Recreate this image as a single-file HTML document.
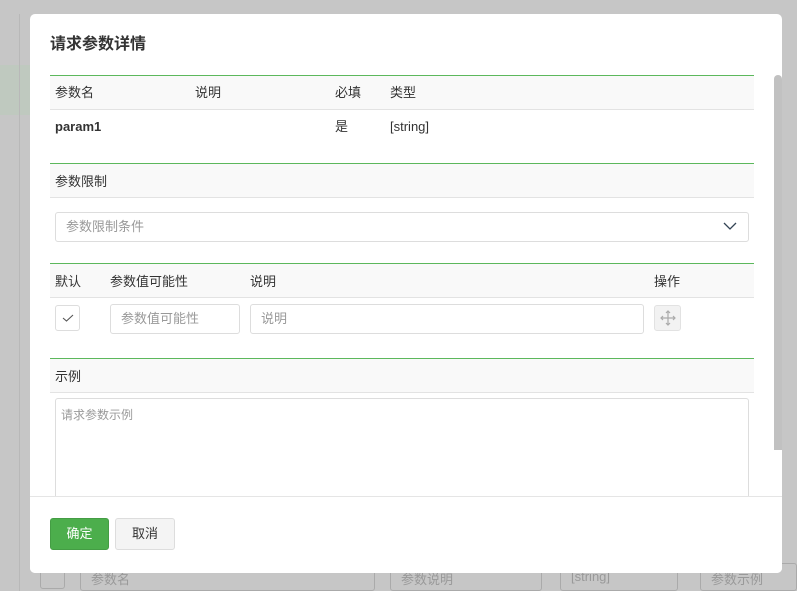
<!DOCTYPE html>
<html><head><meta charset="utf-8"><style>
*{box-sizing:border-box;margin:0;padding:0}
body{width:797px;height:591px;overflow:hidden;background:#c6c6c6;font-family:"Liberation Sans","Noto Sans CJK SC",sans-serif;font-size:13px;color:#333;position:relative}
.a{position:absolute}
.t{line-height:20px;height:20px}
.modal{left:30px;top:14px;width:752px;height:559px;background:#fff;border-radius:5px;overflow:hidden}
.hd{background:#f9f9f9;border-top:1px solid #5cb85c;border-bottom:1px solid #e3e3e3;height:35px}
.inp{border:1px solid #ddd;border-radius:3px;background:#fff;color:#999;padding-left:10px}
</style></head><body>
<div class="a" style="left:0;top:65px;width:30px;height:50px;background:#bfc9bf"></div>
<div class="a" style="left:19px;top:14px;width:1px;height:577px;background:#b8b8b8"></div>
<div class="a" style="left:40px;top:563px;width:25px;height:26px;border:1px solid #aaa;border-radius:3px"></div>
<div class="a" style="left:80px;top:563px;width:295px;height:28px;border:1px solid #aaa;border-radius:3px;color:#999;padding:5px 10px">参数名</div>
<div class="a" style="left:390px;top:563px;width:152px;height:28px;border:1px solid #aaa;border-radius:3px;color:#999;padding:5px 10px">参数说明</div>
<div class="a" style="left:560px;top:563px;width:118px;height:28px;border:1px solid #aaa;border-radius:3px;color:#999;padding:5px 10px">[string]</div>
<div class="a" style="left:700px;top:563px;width:97px;height:28px;border:1px solid #aaa;border-radius:3px;color:#999;padding:5px 10px">参数示例</div>
<div class="a modal">
 <div class="a" style="left:20px;top:19px;font-size:16px;font-weight:bold;color:#333;line-height:24px">请求参数详情</div>
 <div class="a" style="left:744px;top:61px;width:8px;height:375px;background:#c1c1c1;border-radius:4px 4px 0 0"></div>
 <div class="a hd" style="left:20px;top:61px;width:704px"></div>
 <div class="a t" style="left:25px;top:69px">参数名</div>
 <div class="a t" style="left:165px;top:69px">说明</div>
 <div class="a t" style="left:305px;top:69px">必填</div>
 <div class="a t" style="left:360px;top:69px">类型</div>
 <div class="a t" style="left:25px;top:103px;font-weight:bold">param1</div>
 <div class="a t" style="left:305px;top:103px">是</div>
 <div class="a t" style="left:360px;top:103px">[string]</div>
 <div class="a hd" style="left:20px;top:149px;width:704px"></div>
 <div class="a t" style="left:25px;top:158px">参数限制</div>
 <div class="a inp" style="left:25px;top:198px;width:694px;height:30px;line-height:28px">参数限制条件</div>
 <svg class="a" style="left:692px;top:206px" width="16" height="12"><path d="M2 3 L8 9 L14 3" fill="none" stroke="#345" stroke-width="1.3"/></svg>
 <div class="a hd" style="left:20px;top:249px;width:704px"></div>
 <div class="a t" style="left:25px;top:258px">默认</div>
 <div class="a t" style="left:80px;top:258px">参数值可能性</div>
 <div class="a t" style="left:220px;top:258px">说明</div>
 <div class="a t" style="left:624px;top:258px">操作</div>
 <div class="a" style="left:25px;top:291px;width:25px;height:26px;border:1px solid #ddd;border-radius:3px"></div>
 <svg class="a" style="left:32px;top:299px" width="12" height="10"><path d="M1 5 L4.5 8 L11 2" fill="none" stroke="#555" stroke-width="1.1"/></svg>
 <div class="a inp" style="left:80px;top:290px;width:130px;height:30px;line-height:28px">参数值可能性</div>
 <div class="a inp" style="left:220px;top:290px;width:394px;height:30px;line-height:28px">说明</div>
 <div class="a" style="left:624px;top:291px;width:27px;height:26px;background:#f2f2f2;border:1px solid #e2e2e2;border-radius:3px"></div>
 <svg class="a" style="left:630px;top:296px" width="16" height="16"><path d="M8 1V15M1 8H15M6 3L8 1L10 3M6 13L8 15L10 13M3 6L1 8L3 10M13 6L15 8L13 10" fill="none" stroke="#aaa" stroke-width="1.2"/></svg>
 <div class="a hd" style="left:20px;top:344px;width:704px"></div>
 <div class="a t" style="left:25px;top:353px">示例</div>
 <div class="a inp" style="left:25px;top:384px;width:694px;height:120px;padding:7px 5px;font-size:12px;line-height:18px">请求参数示例</div>
 <div class="a" style="left:0;top:482px;width:752px;height:77px;background:#fff;border-top:1px solid #e5e5e5"></div>
 <div class="a" style="left:20px;top:504px;width:59px;height:32px;background:#4cae4c;border:1px solid #449d44;border-radius:3px;color:#fff;text-align:center;line-height:30px">确定</div>
 <div class="a" style="left:85px;top:504px;width:60px;height:32px;background:#f4f4f4;border:1px solid #ddd;border-radius:3px;text-align:center;line-height:30px">取消</div>
</div>
</body></html>
